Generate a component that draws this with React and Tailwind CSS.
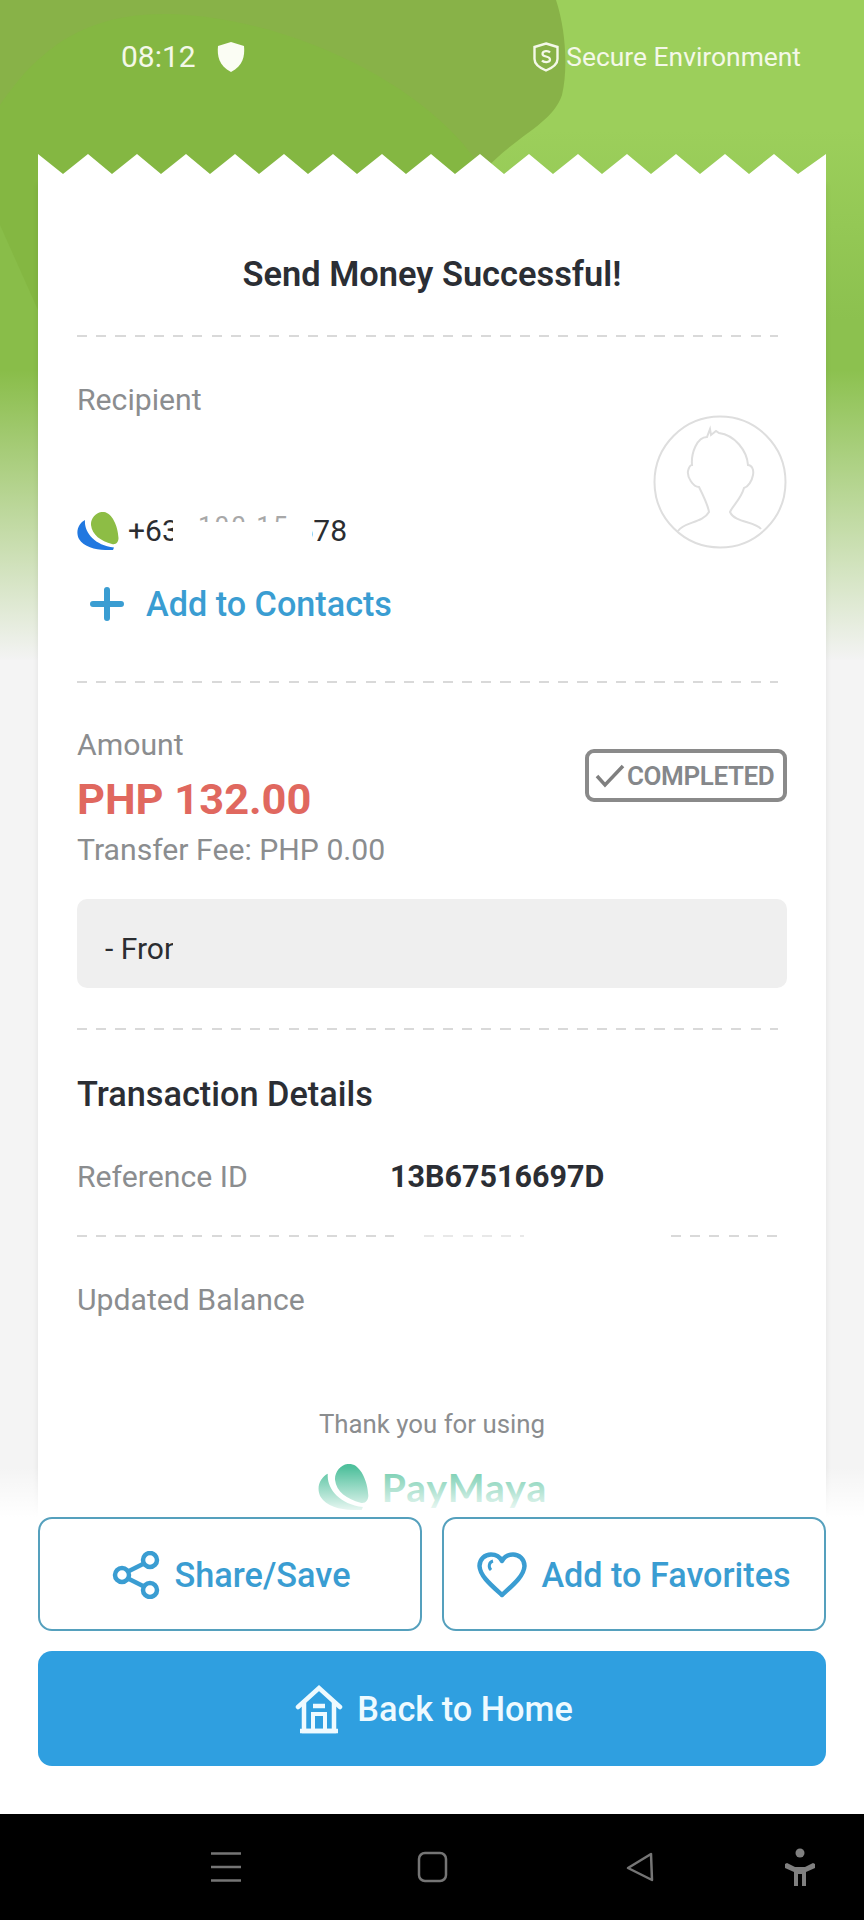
const BLUE = "#3a9dd2";

function Dash({ className = "" }) {
  return <div className={"h-[2px] bg-[repeating-linear-gradient(90deg,#d9d9d9_0,#d9d9d9_10px,transparent_10px,transparent_19.25px)] " + className} />;
}

function Logo({ className, green, blue }) {
  return (
    <svg viewBox="0 0 42 38" className={className}>
      <path fill={blue} d="M8 8C7 20 17 33 37 35.500L36 38C24 38.500 8 37 2 27C-2 19 2 11 8 8Z" />
      <path fill={green} d="M27 0C35 1 41 14 41.500 26C41.500 30 39 33 35 32C24 29 15 23 14 13C13.500 6 20 -1 27 0Z" />
    </svg>
  );
}

function Background() {
  return (
    <div className="absolute inset-x-0 top-0 h-[660px] bg-[linear-gradient(180deg,#9ccf5b_0,#9ccf5b_130px,#8cc14f_320px)]">
      <svg viewBox="0 0 864 660" className="absolute inset-0 w-full h-full">
        <path fill="#88b248" d="M0 0H556C566 30 568 70 562 95C552 125 515 135 480 175V660H0Z" />
        <path fill="#84b742" d="M0 105C40 45 90 12 170 14C280 18 390 70 450 130C470 150 480 165 480 175V660H0Z" />
        <path fill="#89bd49" d="M0 225L38 310V660H0Z" />
      </svg>
      <div className="absolute inset-x-0 bottom-0 h-[290px] bg-gradient-to-b from-transparent to-[#f3f3f3]" />
    </div>
  );
}

function StatusBar() {
  return (
    <div className="relative h-[154px] shrink-0 flex justify-between items-start pt-[38px] pl-[121px] pr-[63px] text-[#f4f8e8] font-[Roboto,sans-serif]">
      <div className="flex items-center gap-[21px]">
        <span className="text-[30px] leading-[38px]">08:12</span>
        <svg viewBox="0 0 28 30" className="w-[28px] h-[30px]">
          <path fill="#fbfdf4" d="M14 0L27 4C28 14 26 24 14 30C2 24 0 14 1 4Z" />
        </svg>
      </div>
      <div className="flex items-center gap-[7px]">
        <svg viewBox="0 0 26 30" className="w-[26px] h-[30px]" fill="none" stroke="#f4f8e8">
          <path strokeWidth="2.4" d="M13 1.500L24.500 5V17C24.500 22 19 26 13 28.500C7 26 1.500 22 1.500 17V5Z" />
          <path strokeWidth="2.200" d="M17 10.500C15.500 8.500 9.500 8.500 9.500 12C9.500 15.500 17 13.500 17 17.500C17 21 10.500 20.500 9 18.500" />
        </svg>
        <span className="text-[26.400px] leading-[38px]">Secure Environment</span>
      </div>
    </div>
  );
}

function Avatar() {
  return (
    <svg viewBox="0 0 134 134" className="w-[134px] h-[134px] mt-[78px] shrink-0" fill="none" stroke="#dedede" strokeWidth="2">
      <circle cx="67" cy="67" r="65.500" />
      <path d="M25 116C30 107 50 108 56 97C55 90 52 84 46 72C40 72 34 62 35 56C36 52 37 50 39 50C38 38 44 22 54 22L57 14L58 20L63 16L66 18C82 20 94 36 95 50C99 50 101 55 100 60C99 66 95 72 91 73C88 84 80 90 77 97C82 108 102 106 108 114" />
    </svg>
  );
}

function Card() {
  return (
    <div className="relative mx-[38px] flex-1 min-h-0 flex flex-col font-[Roboto,sans-serif]">
      <svg viewBox="0 0 788 20" preserveAspectRatio="none" className="block w-full h-[20px] shrink-0">
        <path fill="#fff" d="M0 0L25 20L50 0L74 20L99 0L123 20L148 0L172 20L197 0L221 20L246 0L270 20L295 0L319 20L344 0L368 20L393 0L417 20L442 0L466 20L491 0L515 20L540 0L564 20L589 0L613 20L638 0L662 20L687 0L711 20L736 0L760 20L788 0V20.500H0Z" />
      </svg>
      <div className="flex-1 min-h-0 overflow-hidden bg-white px-[39px] shadow-[0_10px_6px_rgba(0,0,0,0.08)]">
        <h1 className="mt-[80px] text-center text-[34.400px] leading-[40px] font-semibold text-[#2b2e34]">Send Money Successful!</h1>
        <Dash className="mt-[41px] w-[701px]" />

        <div className="flex justify-between">
          <div>
            <div className="mt-[47px] text-[30.200px] leading-[32px] text-[#8b8d8f]">Recipient</div>
            <div className="mt-[95px] h-[40px] flex items-center text-[30px] leading-[40px] text-[#2b2d31]">
              <Logo className="w-[42px] h-[38px] mr-[9px]" green="#8dbd45" blue="#2178e0" />
              <span className="w-[45px] overflow-hidden whitespace-nowrap">+63</span>
              <span className="w-[97px] ml-[25px] h-[7px] mb-[26px] overflow-hidden leading-[22px] tracking-[2px] text-[#a8a8a8] text-[26px] whitespace-nowrap">100 15</span>
              <span className="w-[35px] ml-[17px] overflow-hidden flex justify-end">578</span>
            </div>
            <div className="mt-[33px] h-[40px] flex items-center pl-[13px] gap-[22px]">
              <svg viewBox="0 0 34 34" className="w-[34px] h-[34px]" stroke={BLUE} strokeWidth="6" strokeLinecap="round">
                <path d="M3 17H31M17 3V31" />
              </svg>
              <span className="text-[34.200px] leading-[40px] font-medium text-[#3a9dd2]">Add to Contacts</span>
            </div>
          </div>
          <Avatar />
        </div>

        <Dash className="mt-[57px] w-[701px]" />

        <div className="flex justify-between">
          <div>
            <div className="mt-[46px] text-[30.200px] leading-[32px] text-[#8b8d8f]">Amount</div>
            <div className="mt-[14px] text-[43.400px] leading-[50px] font-bold text-[#e0685f]">PHP 132.00</div>
            <div className="mt-[9px] text-[30.200px] leading-[32px] text-[#8b8d8f]">Transfer Fee: PHP 0.00</div>
          </div>
          <div className="mt-[66px] w-[202px] h-[53px] self-start border-[4px] border-[#8a8a8a] rounded-[9px] flex items-center pl-[6px] gap-[2px]">
            <svg viewBox="0 0 30 24" className="w-[30px] h-[24px]" fill="none" stroke="#7f7f7f" strokeWidth="3.500">
              <path d="M2 12L10 21L28 2" />
            </svg>
            <span className="text-[26px] leading-[30px] font-semibold text-[#85878a] tracking-[-0.4px]">COMPLETED</span>
          </div>
        </div>

        <div className="mt-[33px] h-[89px] rounded-[10px] bg-[#efefef] flex items-start pt-[35px]">
          <span className="ml-[28px] w-[68px] overflow-hidden whitespace-nowrap text-[30px] leading-[30px] text-[#2b2d31]">- From</span>
        </div>

        <Dash className="mt-[40px] w-[701px]" />
        <h2 className="mt-[44px] text-[34.300px] leading-[40px] font-medium text-[#2b2e34]">Transaction Details</h2>
        <div className="mt-[47px] flex items-center">
          <span className="w-[313px] text-[30.200px] leading-[32px] text-[#8b8d8f]">Reference ID</span>
          <span className="text-[30.500px] leading-[32px] font-bold text-[#2b2e34]">13B67516697D</span>
        </div>

        <div className="mt-[42px] flex">
          <Dash className="w-[317px]" />
          <Dash className="w-[100px] ml-[30px] opacity-60" />
          <Dash className="w-[107px] ml-[147px]" />
        </div>

        <div className="mt-[47px] text-[30.200px] leading-[32px] text-[#8b8d8f]">Updated Balance</div>
        <div className="mt-[93px] text-center text-[25.800px] leading-[30px] text-[#8b8d8f]">Thank you for using</div>
        <div className="mt-[25px] flex justify-center items-center gap-[12px]">
          <Logo className="w-[53px] h-[46px]" green="#4fc09c" blue="#4fc09c" />
          <span className="font-[Lato,sans-serif] text-[39px] leading-[46px] font-bold text-[#6fcbac] tracking-[1px]">PayMaya</span>
        </div>
      </div>
    </div>
  );
}

function Actions() {
  const outline = "flex-1 h-[114px] rounded-[14px] border-2 border-[#55a0bd] bg-white flex items-center justify-center pt-[2px]";
  return (
    <div className="relative shrink-0 bg-white h-[297px] px-[38px] font-[Roboto,sans-serif]">
      <div className="absolute inset-x-0 -top-[50px] h-[50px] bg-gradient-to-b from-white/0 to-white" />
      <div className="relative flex gap-[20px]">
        <div className={outline + " gap-[14px]"}>
          <svg viewBox="0 0 48 48" className="w-[48px] h-[48px] ml-[3px]" fill="none" stroke={BLUE} strokeWidth="4.500">
            <circle cx="10" cy="24" r="7" />
            <circle cx="38" cy="9" r="7" />
            <circle cx="38" cy="39" r="7" />
            <path d="M16 20.500L32 12.500M16 27.500L32 35.500" />
          </svg>
          <span className="text-[34.300px] leading-[40px] font-medium text-[#3a9dd2]">Share/Save</span>
        </div>
        <div className={outline + " gap-[14px]"}>
          <svg viewBox="0 0 50 46" className="w-[50px] h-[46px]" fill="none" stroke={BLUE} strokeWidth="4.500" strokeLinejoin="round">
            <path d="M25 43C14 33 3 24 2.500 14C2.500 7 8 2.500 14 2.500C19 2.500 23 5 25 9C27 5 31 2.500 36 2.500C42 2.500 47.500 7 47.500 14C47 24 36 33 25 43Z" />
            <path strokeWidth="3" d="M14 18C11 15 12 10 16 9" />
          </svg>
          <span className="text-[34.200px] leading-[40px] font-medium text-[#3a9dd2]">Add to Favorites</span>
        </div>
      </div>
      <div className="relative mt-[20px] h-[115px] rounded-[14px] bg-[#2f9fe0] flex items-center justify-center gap-[14px] pl-[4px]">
        <svg viewBox="0 0 48 50" className="w-[48px] h-[50px]" fill="none" stroke="#eefaff" strokeWidth="4.500">
          <path d="M3 23L24 4L45 23" strokeLinecap="round" />
          <path d="M9 18V47H39V18" />
          <path d="M5 47H43" />
          <path d="M18 22H30" />
          <path d="M18 47V30H30V47" strokeWidth="4" />
        </svg>
        <span className="text-[34.300px] leading-[40px] font-medium text-[#eefaff]">Back to Home</span>
      </div>
    </div>
  );
}

function NavBar() {
  return (
    <div className="relative h-[106px] shrink-0 bg-black">
      <svg viewBox="0 0 864 106" className="block w-full h-full" fill="none" stroke="#757575" strokeWidth="2.500">
        <path d="M211 39.500H241M211 53H241M211 66.500H241" />
        <rect x="419" y="39" width="27" height="28" rx="6" />
        <path d="M651 40L652 66L628 54Z" strokeLinejoin="round" />
        <g fill="#808080" stroke="none">
          <circle cx="800" cy="39" r="4.500" />
          <path d="M785 50L787 49L795 53H805L813 49L815 50L815 54L806 58V72H802V60H798V72H794V58L785 54Z" />
        </g>
      </svg>
    </div>
  );
}

export default function App() {
  return (
    <div className="relative w-[864px] h-[1920px] overflow-hidden bg-[#f4f4f4] flex flex-col">
      <Background />
      <StatusBar />
      <Card />
      <Actions />
      <NavBar />
    </div>
  );
}
